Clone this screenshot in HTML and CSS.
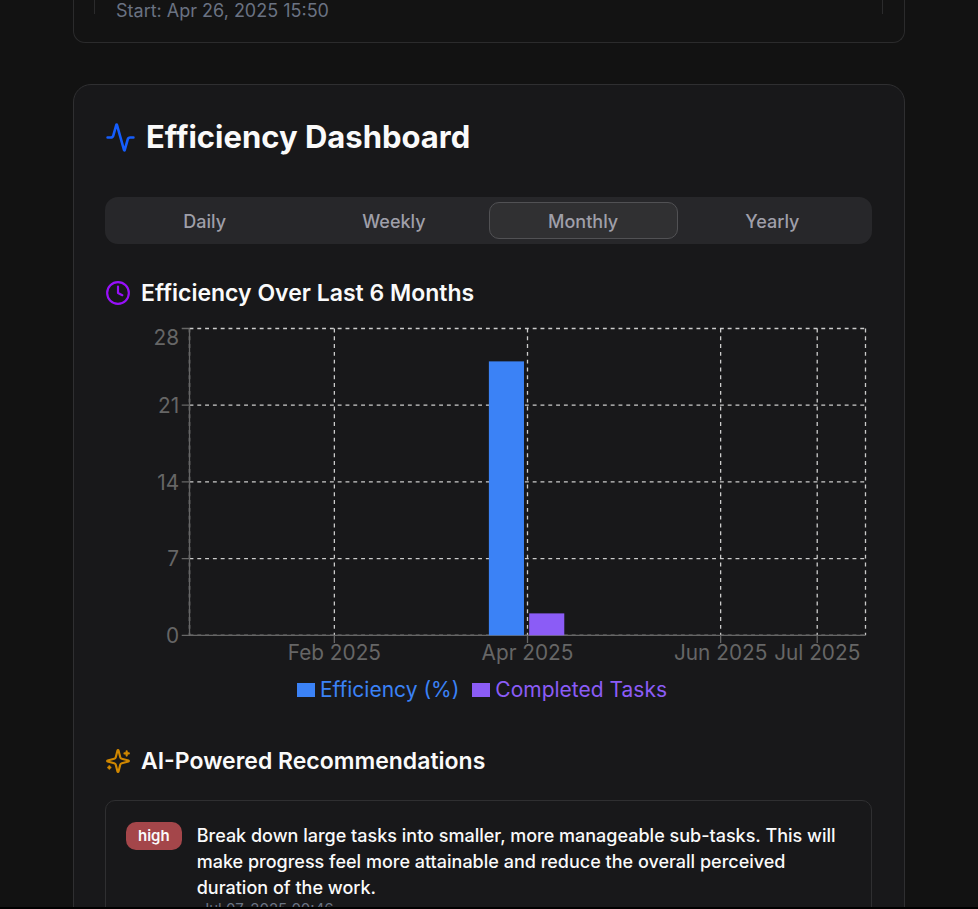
FILE: index.html
```html
<!DOCTYPE html>
<html lang="en">
<head>
<meta charset="utf-8">
<meta name="viewport" content="width=device-width, initial-scale=1">
<title>Efficiency Dashboard</title>
<link rel="stylesheet" href="styles.css">
</head>
<body>
<main class="page">
  <section class="history">
    <div class="entry">
      <p class="entry-time">Start: Apr 26, 2025 15:50</p>
    </div>
  </section>

  <section class="dashboard">
    <h2 class="title">
      <svg class="icon icon-lg icon-blue" viewBox="0 0 24 24" aria-hidden="true"><path d="M22 12h-2.48a2 2 0 0 0-1.93 1.46l-2.35 8.36a.25.25 0 0 1-.48 0L9.24 2.18a.25.25 0 0 0-.48 0l-2.35 8.36A2 2 0 0 1 4.49 12H2"/></svg>
      Efficiency Dashboard
    </h2>

    <div class="tabs" role="tablist">
      <button class="tab" type="button" role="tab" aria-selected="false">Daily</button>
      <button class="tab" type="button" role="tab" aria-selected="false">Weekly</button>
      <button class="tab tab-active" type="button" role="tab" aria-selected="true">Monthly</button>
      <button class="tab" type="button" role="tab" aria-selected="false">Yearly</button>
    </div>

    <h3 class="subtitle">
      <svg class="icon icon-purple" viewBox="0 0 24 24" aria-hidden="true"><circle cx="12" cy="12" r="10"/><path d="M12 6v6l4 2"/></svg>
      Efficiency Over Last 6 Months
    </h3>

    <figure class="chart">
      <svg class="plot" viewBox="0 0 590 271">
        <g class="grid">
          <path d="M65 5H585"/><path d="M65 64H585"/><path d="M65 123H585"/><path d="M65 182H585"/><path d="M65 241H585"/>
          <path d="M65 5V241"/><path d="M176.43 5V241"/><path d="M325 5V241"/><path d="M473.57 5V241"/><path d="M547.86 5V241"/><path d="M585 5V241"/>
        </g>
        <g class="axis">
          <path d="M65 241H585M176.43 241v6M325 241v6M473.57 241v6M547.86 241v6"/>
          <path d="M65 5V241M59 5h6M59 64h6M59 123h6M59 182h6M59 241h6"/>
        </g>
        <g class="label label-x">
          <text x="176.43" y="260">Feb 2025</text>
          <text x="325" y="260">Apr 2025</text>
          <text x="473.57" y="260">Jun 2025</text>
          <text x="547.86" y="260">Jul 2025</text>
        </g>
        <g class="label label-y">
          <text x="57" y="18">28</text>
          <text x="57" y="70">21</text>
          <text x="57" y="129">14</text>
          <text x="57" y="188">7</text>
          <text x="57" y="247">0</text>
        </g>
        <rect class="bar-blue" x="295.29" y="30.29" width="27" height="210.71"/>
        <rect class="bar-violet" x="326.29" y="224.14" width="27" height="16.86"/>
      </svg>
      <ul class="legend">
        <li class="legend-item legend-blue">Efficiency (%)</li>
        <li class="legend-item legend-violet">Completed Tasks</li>
      </ul>
    </figure>

    <h3 class="subtitle">
      <svg class="icon icon-amber" viewBox="0 0 24 24" aria-hidden="true"><path d="M9.937 15.5A2 2 0 0 0 8.5 14.063l-6.135-1.582a.5.5 0 0 1 0-.962L8.5 9.936A2 2 0 0 0 9.937 8.5l1.582-6.135a.5.5 0 0 1 .963 0L14.063 8.5A2 2 0 0 0 15.5 9.937l6.135 1.581a.5.5 0 0 1 0 .964L15.5 14.063a2 2 0 0 0-1.437 1.437l-1.582 6.135a.5.5 0 0 1-.963 0z"/><path d="M20 3v4M22 5h-4M4 17v2M5 18H3"/></svg>
      AI-Powered Recommendations
    </h3>

    <article class="tip">
      <span class="badge">high</span>
      <div class="tip-body">
        <p class="tip-text">Break down large tasks into smaller, more manageable sub-tasks. This will make progress feel more attainable and reduce the overall perceived duration of the work.</p>
        <time class="tip-date">Jul 07, 2025 00:46</time>
      </div>
    </article>
  </section>
</main>
</body>
</html>
```
FILE: styles.css
```css
* { box-sizing: border-box; margin: 0; padding: 0; }

body {
  height: 100vh;
  overflow: hidden;
  border-bottom: 2px solid #000;
  background: #000;
  color: #fafafa;
  font-family: Inter, "Liberation Sans", sans-serif;
}

.page {
  height: 100%;
  overflow: hidden;
  padding: 0 73px;
  background: #121212;
}

.history {
  padding: 0 21px 20px 20px;
  border: 1px solid #2b2b2c;
  border-top: 0;
  border-radius: 0 0 12px 12px;
  background: #131313;
}

.entry {
  padding: 0 22px;
  background:
    linear-gradient(#2b2b2c, #2b2b2c) left top / 1px 14px no-repeat,
    linear-gradient(#2b2b2c, #2b2b2c) right top / 1px 14px no-repeat;
}

.entry-time {
  color: #6a7282;
  font-size: 18px;
  line-height: 22px;
}

.dashboard {
  margin-top: 41px;
  padding: 31px 32px 31px 31px;
  border: 1px solid #2f2f31;
  border-radius: 18px;
  background: #18181a;
}

.title,
.subtitle {
  display: flex;
  align-items: center;
  gap: 10px;
}

.title {
  font-size: 31px;
  font-weight: 700;
  line-height: 42px;
}

.subtitle {
  font-size: 23px;
  font-weight: 600;
  line-height: 36px;
}

.icon {
  flex: none;
  width: 26px;
  height: 26px;
  fill: none;
  stroke: currentColor;
  stroke-width: 2;
  stroke-linecap: round;
  stroke-linejoin: round;
}

.icon-lg { width: 31px; height: 31px; }
.icon-blue { color: #155dfc; }
.icon-purple { color: #9810fa; }
.icon-amber { color: #d08700; }

.tabs {
  display: grid;
  grid-template-columns: repeat(4, 1fr);
  margin: 39px 0 31px;
  padding: 5px;
  border-radius: 13px;
  background: #27272a;
}

.tab {
  height: 37px;
  padding-top: 2px;
  border: 1px solid transparent;
  border-radius: 10px;
  background: transparent;
  color: #9f9fa9;
  font: 500 18px/26px Inter, "Liberation Sans", sans-serif;
}

.tab-active {
  border-color: #515154;
  background: #303032;
}

.chart { margin: 11px 0 38px; }

.plot {
  display: block;
  width: 100%;
}

.grid {
  fill: none;
  stroke: #ccc;
  stroke-dasharray: 3 3;
}

.axis {
  fill: none;
  stroke: #666;
}

.label {
  fill: #666;
  font-size: 16px;
}

.label-x { text-anchor: middle; }
.label-y { text-anchor: end; }
.bar-blue { fill: #3b82f6; }
.bar-violet { fill: #8b5cf6; }

.legend {
  display: flex;
  justify-content: center;
  margin-top: 1px;
  list-style: none;
  font-size: 21px;
  line-height: 30px;
}

.legend-item {
  display: flex;
  align-items: center;
  gap: 5px;
  margin-right: 13px;
}

.legend-item::before {
  content: "";
  width: 18px;
  height: 14px;
  background: currentColor;
}

.legend-blue { color: #3b82f6; }
.legend-violet { color: #8b5cf6; }

.tip {
  display: flex;
  align-items: flex-start;
  gap: 15px;
  margin-top: 21px;
  padding: 21px 20px;
  border: 1px solid #2f2f31;
  border-radius: 10px;
}

.badge {
  padding: 0 12px;
  border-radius: 10px;
  background: #a4464a;
  font-size: 15px;
  font-weight: 600;
  line-height: 28px;
}

.tip-body { padding-top: 1px; }

.tip-text {
  font-size: 18px;
  font-weight: 500;
  line-height: 26px;
}

.tip-date {
  display: block;
  padding-left: 4px;
  color: #6a7282;
  font-size: 15px;
  line-height: 16px;
}
```
